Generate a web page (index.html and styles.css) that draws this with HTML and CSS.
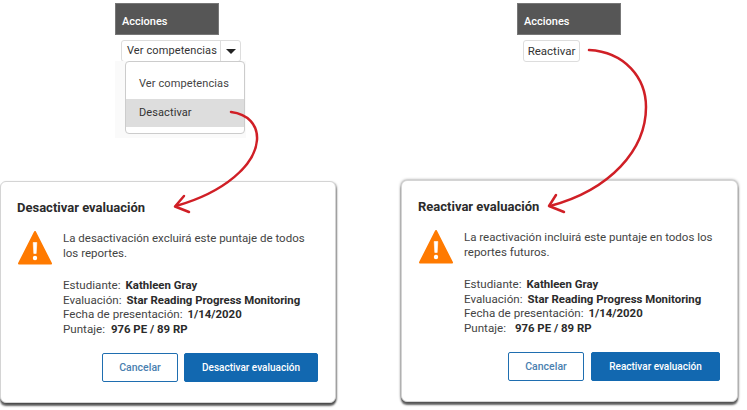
FILE: index.html
```html
<!DOCTYPE html>
<html lang="es">
<head>
<meta charset="utf-8">
<title>Desactivar y reactivar evaluación</title>
<link rel="stylesheet" href="styles.css">
</head>
<body>
<main class="canvas">
  <section class="actions actions-left">
    <div class="actions-head">Acciones</div>
    <div class="split">
      <span class="split-label">Ver competencias</span>
      <span class="split-caret"><i class="caret"></i></span>
    </div>
    <div class="menu-wrap">
      <ul class="menu">
        <li class="menu-item">Ver competencias</li>
        <li class="menu-item menu-item-active">Desactivar</li>
      </ul>
    </div>
  </section>

  <section class="actions actions-right">
    <div class="actions-head">Acciones</div>
    <div class="single">Reactivar</div>
  </section>

  <section class="dialog dialog-left">
    <h2 class="dialog-title">Desactivar evaluación</h2>
    <div class="dialog-body">
      <svg class="warn" viewBox="0 0 36 36" width="36" height="36" aria-hidden="true">
        <path d="M18 2 L34 33.5 H2 Z" fill="#ff7a00" stroke="#ff7a00" stroke-width="2" stroke-linejoin="round"/>
        <path d="M16.2 12.5 h3.6 l-.6 11 h-2.4 Z" fill="#fff" stroke="#fff" stroke-width=".6" stroke-linejoin="round"/>
        <circle cx="18" cy="28" r="2.2" fill="#fff"/>
      </svg>
      <div class="dialog-text">
        <p class="message">La desactivación excluirá este puntaje de todos los reportes.</p>
        <dl class="facts">
          <div class="fact"><dt>Estudiante:</dt><dd>Kathleen Gray</dd></div>
          <div class="fact"><dt>Evaluación:</dt><dd>Star Reading Progress Monitoring</dd></div>
          <div class="fact"><dt>Fecha de presentación:</dt><dd>1/14/2020</dd></div>
          <div class="fact fact-score-left"><dt>Puntaje:</dt><dd>976 PE / 89 RP</dd></div>
        </dl>
      </div>
    </div>
    <div class="dialog-actions dialog-actions-left">
      <button class="btn btn-outline">Cancelar</button>
      <button class="btn btn-primary btn-wide-left">Desactivar evaluación</button>
    </div>
  </section>

  <section class="dialog dialog-right">
    <h2 class="dialog-title">Reactivar evaluación</h2>
    <div class="dialog-body">
      <svg class="warn" viewBox="0 0 36 36" width="36" height="36" aria-hidden="true">
        <path d="M18 2 L34 33.5 H2 Z" fill="#ff7a00" stroke="#ff7a00" stroke-width="2" stroke-linejoin="round"/>
        <path d="M16.2 12.5 h3.6 l-.6 11 h-2.4 Z" fill="#fff" stroke="#fff" stroke-width=".6" stroke-linejoin="round"/>
        <circle cx="18" cy="28" r="2.2" fill="#fff"/>
      </svg>
      <div class="dialog-text">
        <p class="message">La reactivación incluirá este puntaje en todos los reportes futuros.</p>
        <dl class="facts">
          <div class="fact"><dt>Estudiante:</dt><dd>Kathleen Gray</dd></div>
          <div class="fact"><dt>Evaluación:</dt><dd>Star Reading Progress Monitoring</dd></div>
          <div class="fact"><dt>Fecha de presentación:</dt><dd>1/14/2020</dd></div>
          <div class="fact fact-score-right"><dt>Puntaje:</dt><dd>976 PE / 89 RP</dd></div>
        </dl>
      </div>
    </div>
    <div class="dialog-actions">
      <button class="btn btn-outline">Cancelar</button>
      <button class="btn btn-primary btn-wide-right">Reactivar evaluación</button>
    </div>
  </section>

  <svg class="arrows" viewBox="0 0 747 410" width="747" height="410" aria-hidden="true">
    <g fill="none" stroke="#d01f26" stroke-width="2.5" stroke-linecap="round" stroke-linejoin="round">
      <path d="M231 112 C248 114 258 125 257 140 C255 165 225 192 176 206"/>
      <path d="M184 196 L175 206.5 L189 212"/>
      <path d="M589 50 C625 52 646 78 646 107 C646 150 610 190 550 206"/>
      <path d="M556 195 L549 206 L564 212"/>
    </g>
  </svg>
</main>
</body>
</html>
```
FILE: styles.css
```css
* { box-sizing: border-box; }
html, body { margin: 0; padding: 0; background: #fff; }
body { font-family: Roboto, "Liberation Sans", sans-serif; color: #333; }
.canvas { position: relative; width: 747px; height: 410px; overflow: hidden; }

.actions { position: absolute; top: 3px; width: 131px; }
.actions-left { left: 115px; }
.actions-right { left: 517px; }
.actions-head {
  width: 104px; height: 32px; padding: 11px 0 0 6px;
  background: #565656; color: #fff;
  border: 1px solid #777;
  font-size: 11px; font-weight: 500; line-height: 14px;
}
.split {
  display: flex; width: 120px; height: 22px; margin: 5px 0 0 6px;
  border: 1px solid #ddd; border-radius: 3px; background: #fff;
  font-size: 11px; letter-spacing: .1px; line-height: 20px; color: #333;
}
.split-label { flex: 1; padding-left: 5px; white-space: nowrap; }
.split-caret { width: 20px; border-left: 1px solid #ddd; display: flex; align-items: center; justify-content: center; }
.caret { width: 0; height: 0; border-left: 5px solid transparent; border-right: 5px solid transparent; border-top: 5px solid #222; }
.single {
  width: 57px; height: 22px; margin: 5px 0 0 6px;
  border: 1px solid #ddd; border-radius: 3px; background: #fff;
  font-size: 11.5px; line-height: 21px; text-align: center; color: #333;
}
.menu-wrap { height: 77px; margin-top: -1px; padding-left: 10px; background: #fafafa; }
.menu {
  list-style: none; width: 120px; height: 73px; margin: 0; padding: 8px 0 0;
  background: #fff; border: 1px solid #ccc; border-radius: 4px;
  font-size: 11px; letter-spacing: .1px; color: #444;
}
.menu-item { height: 29px; padding-left: 13px; line-height: 28px; white-space: nowrap; }
.menu-item-active { height: 28px; background: #ddd; color: #333; line-height: 27px; }

.dialog {
  position: absolute; width: 336px; height: 222px; padding: 17px 17px 0 16px;
  background: #fff; border: 1px solid #d4d4d4; border-radius: 6px;
  box-shadow: 0 3px 2px rgba(0,0,0,.6), 1px 1px 2px rgba(0,0,0,.35);
}
.dialog-left { left: 0; top: 181px; }
.dialog-right { left: 401px; top: 180px; width: 337px; box-shadow: 0 3px 2px rgba(0,0,0,.6), 0 0 3px rgba(0,0,0,.5); }
.dialog-title { margin: 0; font-size: 13px; font-weight: 700; line-height: 18px; color: #2b2b2b; }
.dialog-body { display: flex; margin-top: 13px; }
.warn { flex: none; width: 36px; height: 36px; }
.dialog-text { margin-left: 10px; padding-top: 1px; }
.message { margin: 0; width: 250px; font-size: 11.5px; line-height: 15px; color: #444; }
.facts { margin: 17px 0 0; font-size: 11.6px; line-height: 14.5px; color: #444; }
.fact { display: flex; gap: 5px; white-space: nowrap; }
.fact dt { font-weight: 400; }
.fact dd { margin: 0; font-weight: 700; color: #2b2b2b; font-size: 11.4px; }
.fact-score-left { gap: 6px; }
.fact-score-right { gap: 9px; }

.dialog-actions { display: flex; justify-content: flex-end; gap: 7px; margin-top: 17px; }
.dialog-actions-left { gap: 6px; }
.btn { height: 29px; padding: 0; border-radius: 2px; font: 500 10.5px Roboto, "Liberation Sans", sans-serif; }
.btn-outline { width: 76px; background: #fff; border: 1px solid #1f6eb0; color: #4a7fb0; }
.btn-primary { background: #1268b0; border: 1px solid #1268b0; color: #fff; font-size: 10px; }
.btn-wide-left { width: 134px; }
.btn-wide-right { width: 129px; }

.arrows { position: absolute; left: 0; top: 0; pointer-events: none; }
```
